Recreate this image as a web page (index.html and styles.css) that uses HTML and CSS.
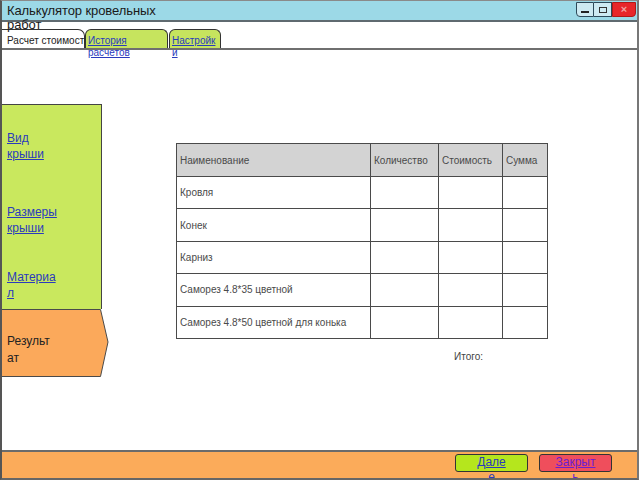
FILE: index.html
```html
<!DOCTYPE html>
<html lang="ru">
<head>
<meta charset="utf-8">
<link rel="stylesheet" href="styles.css">
</head>
<body>
<div class="window">
  <div class="titlebar">
    <div class="title">Калькулятор кровельных работ</div>
    <div class="controls">
      <span class="ctl min"><span class="min-bar"></span></span>
      <span class="ctl max"><span class="max-box"></span></span>
      <span class="ctl close">×</span>
    </div>
  </div>
  <div class="tabs">
    <div class="tab active"><span class="tab-text">Расчет стоимости</span></div>
    <div class="tab green w82"><a class="tab-link" href="#">История расчетов</a></div>
    <div class="tab green w52"><a class="tab-link narrow" href="#">Настройки</a></div>
  </div>
  <div class="content">
    <div class="nav">
      <div class="nav-green">
        <a class="nav-link first" href="#">Вид крыши</a>
        <a class="nav-link second" href="#">Размеры крыши</a>
        <a class="nav-link third" href="#">Материал</a>
      </div>
      <div class="nav-result">
        <svg class="result-shape" width="110" height="68" viewBox="0 0 110 68"><polygon points="0.5,0.5 100.5,0.5 108,33 100.5,67.5 0.5,67.5" fill="#fba95b" stroke="#4a4a4a" stroke-width="1"/></svg>
        <span class="result-text">Результат</span>
      </div>
    </div>
    <div class="main">
      <table class="grid">
        <thead>
          <tr><th class="c1">Наименование</th><th class="c2">Количество</th><th class="c3">Стоимость</th><th class="c4">Сумма</th></tr>
        </thead>
        <tbody>
          <tr><td>Кровля</td><td></td><td></td><td></td></tr>
          <tr><td>Конек</td><td></td><td></td><td></td></tr>
          <tr><td>Карниз</td><td></td><td></td><td></td></tr>
          <tr><td>Саморез 4.8*35 цветной</td><td></td><td></td><td></td></tr>
          <tr><td>Саморез 4.8*50 цветной для конька</td><td></td><td></td><td></td></tr>
        </tbody>
      </table>
      <div class="total">Итого:</div>
    </div>
  </div>
  <div class="footer">
    <a class="btn next" href="#">Далее</a>
    <a class="btn close-btn" href="#">Закрыть</a>
  </div>
</div>
</body>
</html>
```

FILE: styles.css
```css
html, body {
  margin: 0;
  padding: 0;
  background: #ffffff;
}
body {
  font-family: "Liberation Sans", Arial, sans-serif;
}
.window {
  width: 639px;
  height: 480px;
  box-sizing: border-box;
  border-left: 2px solid #555;
  border-right: 2px solid #777;
  border-top: 1px solid #8a8a8a;
  border-bottom: 2px solid #666;
  display: flex;
  flex-direction: column;
  overflow: hidden;
}
.titlebar {
  height: 19px;
  flex: none;
  background: #9cd9e7;
  border-bottom: 2px solid #5f6a70;
  display: flex;
  justify-content: space-between;
  align-items: flex-start;
  position: relative;
  z-index: 2;
}
.title {
  width: 160px;
  font-size: 13px;
  line-height: 14px;
  padding: 3px 0 0 5px;
  color: #1a1a1a;
  letter-spacing: -0.1px;
}
.controls {
  display: flex;
  margin: 1px 1px 0 0;
}
.ctl {
  width: 18px;
  height: 15px;
  box-sizing: border-box;
  border: 1px solid #2d4a5a;
  display: flex;
  align-items: center;
  justify-content: center;
}
.ctl.min {
  border-radius: 0 0 0 4px;
  background: #cdeaf2;
}
.ctl.max {
  background: #cdeaf2;
  border-left: none;
}
.min-bar {
  width: 8px;
  height: 2px;
  background: #222;
  margin-top: 5px;
}
.max-box {
  width: 8px;
  height: 6px;
  border: 1px solid #333;
  box-sizing: border-box;
}
.ctl.close {
  width: 24px;
  background: #e8262a;
  border: 1px solid #b01818;
  border-radius: 0 0 4px 0;
  color: #f0a0a0;
  font-size: 11px;
  font-weight: bold;
  line-height: 1;
}
.tabs {
  height: 26px;
  flex: none;
  border-bottom: 2px solid #6f6f6f;
  display: flex;
  align-items: flex-end;
  padding-left: 0;
  position: relative;
  z-index: 1;
}
.tab {
  height: 19px;
  box-sizing: border-box;
  border: 1px solid #333;
  border-bottom: none;
  border-radius: 0 7px 0 0;
  font-size: 10px;
  line-height: 12px;
  padding: 5px 0 0 2px;
  background: #ffffff;
}
.tab.active {
  width: 83px;
  border-left: none;
  white-space: nowrap;
  color: #222;
  padding-left: 5px;
}
.tab.green {
  background: #c6e45e;
  border-radius: 6px 6px 0 0;
  position: relative;
  z-index: 1;
}
.w82 { width: 83px; margin-left: 0; }
.w52 { width: 52px; margin-left: 1px; }
.tab-link {
  color: #2a3bbd;
  text-decoration: underline;
  display: block;
  width: 50px;
}
.tab-link.narrow {
  width: 46px;
  overflow-wrap: anywhere;
}
.tab-text {
  position: relative;
  z-index: 0;
}
.content {
  flex: 1;
  display: flex;
  min-height: 0;
}
.nav {
  width: 110px;
  flex: none;
  padding-top: 54px;
  display: flex;
  flex-direction: column;
}
.nav-green {
  width: 100px;
  height: 205px;
  box-sizing: border-box;
  background: #c9e85e;
  border: 1px solid #444;
  border-left: none;
  border-bottom: none;
  display: flex;
  flex-direction: column;
  padding: 25px 0 0 5px;
}
.nav-link {
  color: #2a3bbd;
  text-decoration: underline;
  font-size: 12px;
  line-height: 16px;
  width: 52px;
  overflow-wrap: anywhere;
}
.nav-link.second { margin-top: 42px; }
.nav-link.third { margin-top: 33px; }
.nav-result {
  position: relative;
  width: 110px;
  height: 68px;
  margin-left: -2px;
}
.result-shape {
  position: absolute;
  left: 0;
  top: 0;
}
.result-text {
  position: relative;
  display: block;
  width: 48px;
  padding: 24px 0 0 7px;
  font-size: 12px;
  line-height: 17px;
  color: #222;
  overflow-wrap: anywhere;
}
.main {
  flex: 1;
  padding: 93px 0 0 64px;
}
.grid {
  border-collapse: collapse;
  font-size: 10px;
  color: #4a4a4a;
}
.grid th, .grid td {
  border: 1px solid #4a4a4a;
  height: 32.4px;
  padding: 0 0 0 3px;
  text-align: left;
  font-weight: normal;
  box-sizing: border-box;
}
.grid th {
  background: #d3d3d3;
  height: 33px;
}
.grid .c1 { width: 194px; }
.grid .c2 { width: 68px; }
.grid .c3 { width: 64px; }
.grid .c4 { width: 45px; }
.total {
  font-size: 10px;
  color: #444;
  margin: 12px 0 0 278px;
}
.footer {
  height: 24px;
  flex: none;
  background: #fbab5a;
  border-top: 2px solid #6b6b6b;
  display: flex;
  align-items: flex-start;
  padding: 2px 0 0 453px;
  box-sizing: content-box;
}
.btn {
  width: 73px;
  height: 18px;
  box-sizing: border-box;
  border: 1px solid #333;
  border-radius: 3px;
  font-size: 12px;
  line-height: 15px;
  text-align: center;
  color: #2a3bbd;
  text-decoration: underline;
  overflow-wrap: anywhere;
}
.btn.next {
  background: #b5e61d;
  padding: 0 21px;
}
.btn.close-btn {
  background: #ef4e5c;
  color: #6a1fd0;
  margin-left: 11px;
  padding: 0 14px;
}
```
